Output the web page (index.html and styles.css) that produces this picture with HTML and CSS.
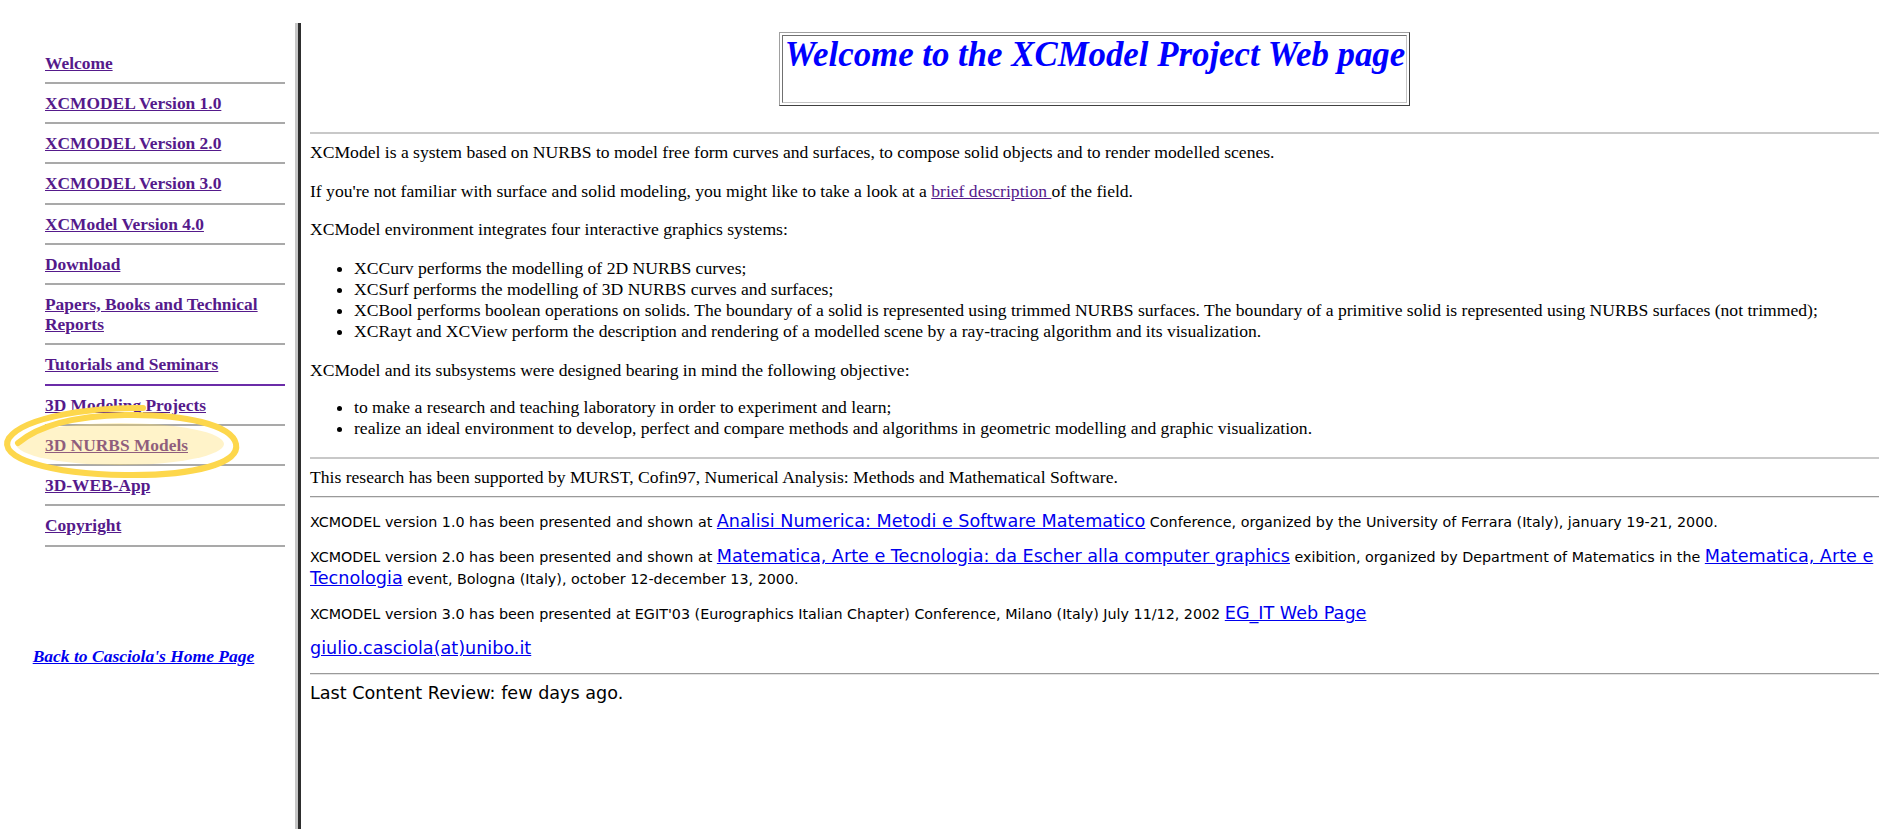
FILE: index.html
```html
<!DOCTYPE html>
<html lang="en">
<head>
<meta charset="utf-8">
<title>XCModel Project</title>
<link rel="stylesheet" href="styles.css">
</head>
<body>
<div class="page">
  <aside class="side">
    <ul class="nav">
      <li><a href="#">Welcome</a></li>
      <li><a href="#">XCMODEL Version 1.0</a></li>
      <li><a href="#">XCMODEL Version 2.0</a></li>
      <li><a href="#">XCMODEL Version 3.0</a></li>
      <li><a href="#">XCModel Version 4.0</a></li>
      <li><a href="#">Download</a></li>
      <li><a href="#">Papers, Books and Technical Reports</a></li>
      <li class="accent"><a href="#">Tutorials and Seminars</a></li>
      <li><a href="#">3D Modeling Projects</a></li>
      <li><a href="#">3D NURBS Models</a></li>
      <li><a href="#">3D-WEB-App</a></li>
      <li><a href="#">Copyright</a></li>
    </ul>
    <p class="back"><a href="#">Back to Casciola's Home Page</a></p>
  </aside>

  <main class="main">
    <div class="title-box"><div class="title-cell"><h1 class="title">Welcome to the XCModel Project Web page</h1></div></div>
    <hr class="rule rule-light rule-top">
    <p class="intro">XCModel is a system based on NURBS to model free form curves and surfaces, to compose solid objects and to render modelled scenes.</p>
    <p class="para">If you're not familiar with surface and solid modeling, you might like to take a look at a <a class="visited" href="#">brief description </a>of the field.</p>
    <p class="para para-before-list">XCModel environment integrates four interactive graphics systems:</p>
    <ul class="list list-first">
      <li>XCCurv performs the modelling of 2D NURBS curves;</li>
      <li>XCSurf performs the modelling of 3D NURBS curves and surfaces;</li>
      <li>XCBool performs boolean operations on solids. The boundary of a solid is represented using trimmed NURBS surfaces. The boundary of a primitive solid is represented using NURBS surfaces (not trimmed);</li>
      <li>XCRayt and XCView perform the description and rendering of a modelled scene by a ray-tracing algorithm and its visualization.</li>
    </ul>
    <p class="para para-tight">XCModel and its subsystems were designed bearing in mind the following objective:</p>
    <ul class="list list-second">
      <li>to make a research and teaching laboratory in order to experiment and learn;</li>
      <li>realize an ideal environment to develop, perfect and compare methods and algorithms in geometric modelling and graphic visualization.</li>
    </ul>
    <hr class="rule rule-light">
    <p class="support">This research has been supported by MURST, Cofin97, Numerical Analysis: Methods and Mathematical Software.</p>
    <hr class="rule rule-dark">
    <div class="news">
      <p class="small small-first">XCMODEL version 1.0 has been presented and shown at <a class="big" href="#">Analisi Numerica: Metodi e Software Matematico</a> Conference, organized by the University of Ferrara (Italy), january 19-21, 2000.</p>
      <p class="small">XCMODEL version 2.0 has been presented and shown at <a class="big" href="#">Matematica, Arte e Tecnologia: da Escher alla computer graphics</a> exibition, organized by Department of Matematics in the <a class="big" href="#">Matematica, Arte e Tecnologia</a> event, Bologna (Italy), october 12-december 13, 2000.</p>
      <p class="small">XCMODEL version 3.0 has been presented at EGIT'03 (Eurographics Italian Chapter) Conference, Milano (Italy) July 11/12, 2002 <a class="big" href="#">EG_IT Web Page</a></p>
      <p class="small small-last"><a class="big" href="#">giulio.casciola(at)unibo.it</a></p>
      <hr class="rule rule-dark">
      <p class="review">Last Content Review: few days ago.</p>
    </div>
  </main>

  <svg class="highlight" viewBox="0 395 245 90" width="245" height="90" aria-hidden="true">
    <ellipse cx="120" cy="444" rx="104" ry="21" fill="rgba(255,220,100,0.35)"/>
    <path d="M 143 408 C 95 407, 25 416, 9 438 C -4 458, 50 474, 125 475 C 195 476, 240 463, 236 444 C 232 425, 185 414, 125 415 C 75 416, 38 426, 18 443" fill="none" stroke="#FDD74C" stroke-width="6" stroke-linecap="round" stroke-linejoin="round"/>
  </svg>
</div>
</body>
</html>
```

FILE: styles.css
```css
html, body {
  margin: 0;
  height: 100%;
}

body {
  font-family: "Liberation Serif", "Times New Roman", serif;
  color: #000;
  background: #fff;
  overflow: hidden;
}

.page {
  display: flex;
  height: 100vh;
  position: relative;
}

/* ---------- left navigation ---------- */
.side {
  width: 295px;
  flex: none;
}

.nav {
  list-style: none;
  margin: 43.5px 0 0 45px;
  padding: 0;
  width: 240px;
  font-weight: bold;
  font-size: 17.4px;
  line-height: 20px;
}

.nav li {
  padding: 9px 0 9.25px;
  border-bottom: 2px solid #a9a9a9;
}

.nav li.accent {
  border-bottom-color: #6b2ca8;
}

.nav a {
  color: #551a8b;
}

.back {
  width: 287px;
  margin: 99.75px 0 0;
  text-align: center;
  font-weight: bold;
  font-style: italic;
  font-size: 17.5px;
  line-height: 20px;
}

.back a {
  color: #0000ee;
}

/* ---------- main content ---------- */
.main {
  flex: 1;
  min-width: 0;
  margin-top: 23px;
  border-left: 3px solid #c6c6c6;
  box-shadow: inset 3px 0 0 #2e2e2e;
  padding: 8.8px 16px 0 12px;
  font-size: 17.6px;
}

.title-box {
  width: fit-content;
  margin: 0 auto;
  border: 1px solid;
  border-color: #a0a0a0 #404040 #404040 #a0a0a0;
  padding: 2px;
}

.title-cell {
  border: 1px solid;
  border-color: #707070 #c4c4c4 #c4c4c4 #707070;
  padding: 1px 1px 29px 2px;
}

.title {
  margin: 0;
  font-size: 34.8px;
  line-height: 36px;
  font-weight: bold;
  font-style: italic;
  color: #0000ff;
  white-space: nowrap;
}

.rule {
  border: 0;
  height: 0;
  margin: 0;
}

.rule-light {
  border-top: 2px solid #c8c8c8;
}

.rule-dark {
  border-top: 1px solid #9a9a9a;
  border-bottom: 1px solid #e4e4e4;
}

.rule-top {
  margin-top: 26.2px;
}

.intro {
  margin: 8px 0 17.6px;
}

.para {
  margin: 0 0 17.6px;
}

.para-before-list {
  margin-bottom: 17.6px;
}

.para-tight {
  margin-bottom: 16.5px;
}

.list {
  margin: 0;
  padding-left: 44px;
}

.list-first {
  margin-bottom: 17.8px;
}

.list-second {
  margin-bottom: 18.2px;
}

a.visited {
  color: #551a8b;
}

.support {
  margin: 8px 0 8.2px;
}

.news {
  font-family: "DejaVu Sans", Verdana, sans-serif;
}

.small {
  font-size: 14.3px;
  line-height: 21px;
  margin: 0 0 13.2px;
}

.small-first {
  margin-top: 12.2px;
}

.small-last {
  margin-bottom: 12.4px;
}

.big {
  font-size: 17.6px;
  color: #0000ee;
}

.review {
  font-size: 17.6px;
  margin: 8.2px 0 0;
}

/* ---------- annotation overlay ---------- */
.highlight {
  position: absolute;
  left: 0;
  top: 395px;
  pointer-events: none;
}
```
